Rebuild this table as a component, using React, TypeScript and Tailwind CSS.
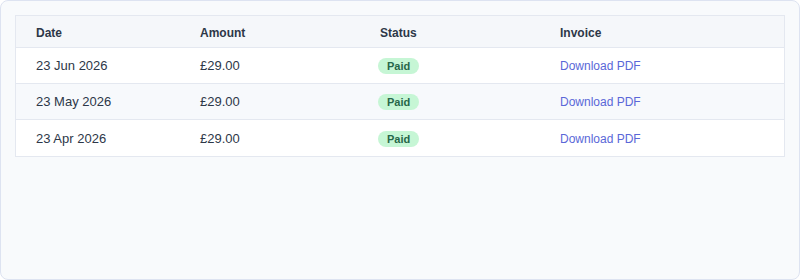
import React from "react";

const rows = [
  { date: "23 Jun 2026", amount: "£29.00" },
  { date: "23 May 2026", amount: "£29.00" },
  { date: "23 Apr 2026", amount: "£29.00" },
];

export default function App() {
  return (
    <div
      className="w-[800px] h-[280px] box-border border border-[#dde3f1] rounded-[8px] bg-[#f8fafc] p-[14px]"
      style={{ fontFamily: '"Liberation Sans", Arial, sans-serif' }}
    >
      <div className="border border-[#e4e8f0] bg-white">
        <div className="grid grid-cols-[164px_180px_180px_1fr] h-[32px] pt-[2px] items-center bg-[#f5f7fa] border-b border-[#e4e8f0] text-[12px] font-bold text-[#2d3748]">
          <div className="pl-[20px]">Date</div>
          <div className="pl-[20px]">Amount</div>
          <div className="pl-[20px]">Status</div>
          <div className="pl-[20px]">Invoice</div>
        </div>
        {rows.map((r, i) => (
          <div
            key={i}
            className={`grid grid-cols-[164px_180px_180px_1fr] h-[36px] pt-[1px] items-center text-[13px] text-[#2d3748] ${
              i < rows.length - 1 ? "border-b border-[#e4e8f0]" : ""
            } ${i === 1 ? "bg-[#f7f9fc]" : "bg-white"}`}
          >
            <div className="pl-[20px]">{r.date}</div>
            <div className="pl-[20px]">{r.amount}</div>
            <div className="pl-[18px]">
              <span className="inline-block h-[16px] leading-[16px] px-[9px] rounded-full bg-[#c6f6d5] text-[#276749] text-[11px] font-bold">
                Paid
              </span>
            </div>
            <div className="pl-[20px]">
              <a className="text-[12px] text-[#5a67d8] cursor-pointer">Download PDF</a>
            </div>
          </div>
        ))}
      </div>
    </div>
  );
}
